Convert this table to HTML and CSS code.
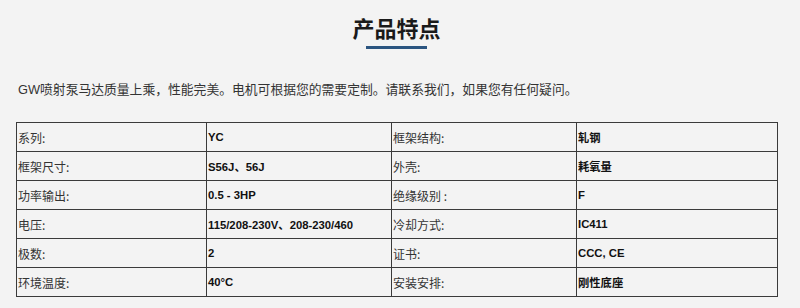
FILE: index.html
```html
<!DOCTYPE html>
<html lang="zh-CN">
<head>
<meta charset="utf-8">
<link rel="stylesheet" href="styles.css">
</head>
<body>
<div class="page">
  <h2 class="title">产品特点</h2>
  <div class="bar"></div>
  <p class="intro">GW喷射泵马达质量上乘，性能完美。电机可根据您的需要定制。请联系我们，如果您有任何疑问。</p>
  <table class="specs">
    <colgroup>
      <col class="c1"><col class="c2"><col class="c3"><col class="c4">
    </colgroup>
    <tr><td>系列:</td><td class="v">YC</td><td>框架结构:</td><td class="v">轧钢</td></tr>
    <tr><td>框架尺寸:</td><td class="v">S56J、56J</td><td>外壳:</td><td class="v">耗氧量</td></tr>
    <tr><td>功率输出:</td><td class="v">0.5 - 3HP</td><td>绝缘级别 :</td><td class="v">F</td></tr>
    <tr><td>电压:</td><td class="v">115/208-230V、208-230/460</td><td>冷却方式:</td><td class="v">IC411</td></tr>
    <tr><td>极数:</td><td class="v">2</td><td>证书:</td><td class="v">CCC, CE</td></tr>
    <tr><td>环境温度:</td><td class="v">40°C</td><td>安装安排:</td><td class="v">刚性底座</td></tr>
  </table>
</div>
</body>
</html>
```

FILE: styles.css
```css
html, body {
  margin: 0;
  padding: 0;
  background: #f3f3f3;
}
body {
  font-family: "Liberation Sans", "Noto Sans CJK SC", sans-serif;
  color: #333;
}
.page {
  width: 761px;
  margin-left: 16px;
  display: flex;
  flex-direction: column;
  align-items: stretch;
}
.title {
  margin: 12px 0 0;
  font-family: "Noto Sans CJK SC", sans-serif;
  font-size: 22px;
  line-height: 30px;
  font-weight: 700;
  color: #1a1a1a;
  text-align: center;
}
.bar {
  align-self: center;
  width: 61px;
  height: 3px;
  margin-top: 4px;
  background: #2b5580;
}
.intro {
  margin: 31px 0 0 2px;
  font-family: "Liberation Sans", "Noto Sans CJK SC", sans-serif;
  font-size: 12.8px;
  line-height: 20px;
  color: #333;
}
.specs {
  margin-top: 22px;
  width: 761px;
  border-collapse: collapse;
  table-layout: fixed;
  font-size: 12px;
}
.c1 { width: 190px; }
.c2 { width: 185px; }
.c3 { width: 185px; }
.c4 { width: 201px; }
.specs td {
  border: 1px solid #3a3a3a;
  height: 29px;
  padding: 0 1px;
  box-sizing: border-box;
  vertical-align: middle;
  color: #333;
  font-family: "Noto Sans CJK SC", sans-serif;
}
.specs td.v {
  font-family: "Liberation Sans", "Noto Sans CJK SC", sans-serif;
  font-size: 11.3px;
  font-weight: 700;
  color: #111;
}
```
